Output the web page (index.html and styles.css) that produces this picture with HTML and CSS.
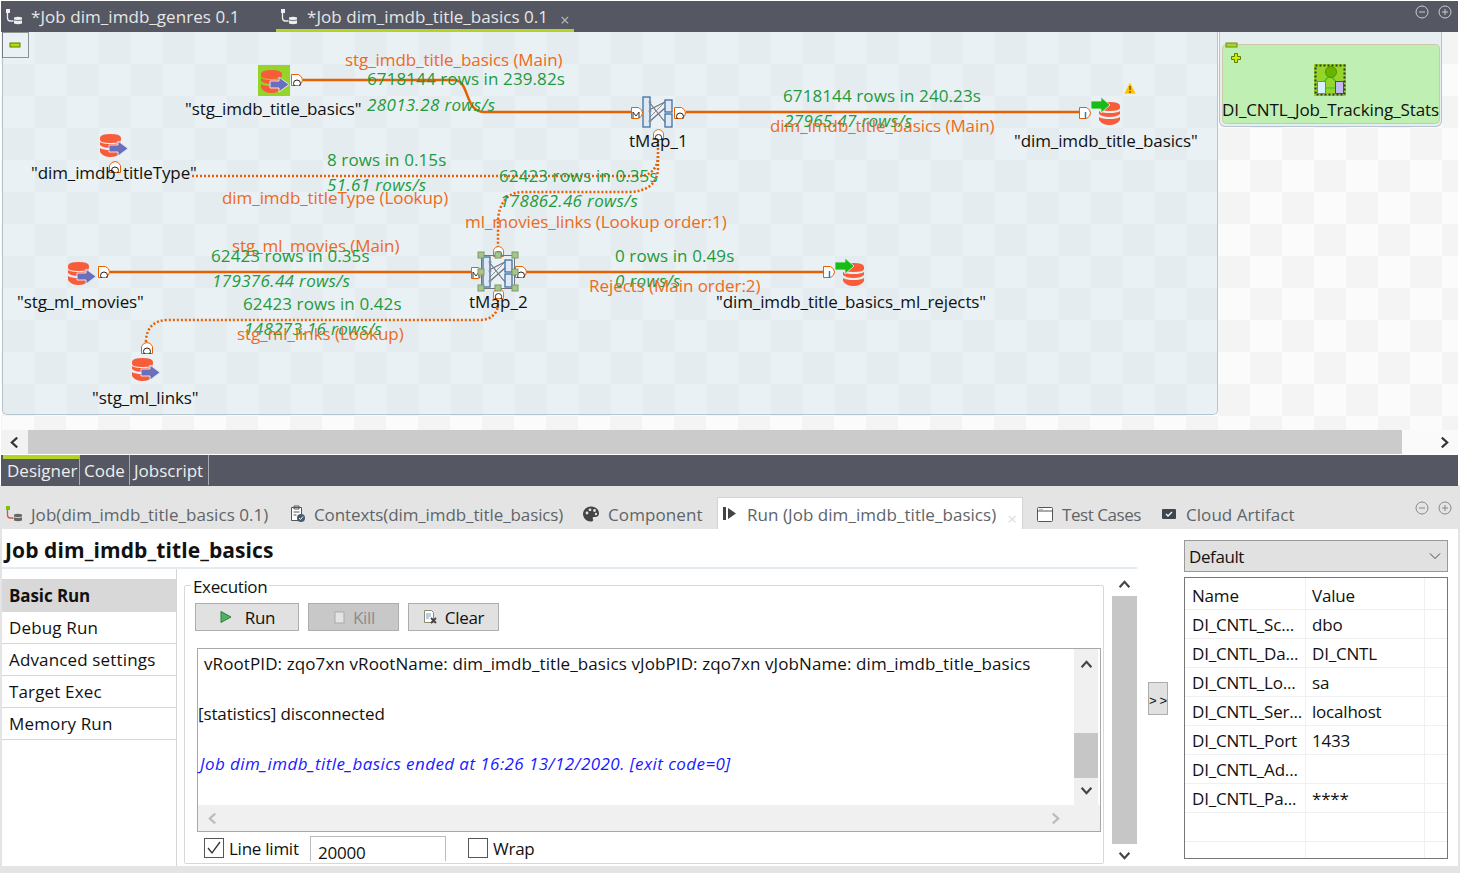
FILE: index.html
```html
<!DOCTYPE html>
<html lang="en">
<head>
    <meta charset="UTF-8">
    <title>Talend Job dim_imdb_title_basics</title>
    <link rel="stylesheet" href="styles.css">
</head>
<body>
<svg class="defs" width="0" height="0">
    <defs>
        <symbol id="job_icon" viewBox="0 0 18 18">
            <rect x="1" y="1" width="4" height="4" fill="currentColor"/>
            <path d="M2.5 5v5q0 3 3 3h3" fill="none" stroke="currentColor" stroke-width="1.3"/>
            <path d="M9 9.5q4-1.600 8 0v6q-4 1.600-8 0z" fill="currentColor"/>
            <path d="M9 12q4 1.300 8 0" fill="none" stroke="#555862" stroke-width=".8"/>
        </symbol>
        <symbol id="job_color" viewBox="0 0 18 18">
            <rect x="1" y="1" width="4" height="4" fill="#7cc400"/>
            <path d="M2.5 5v5q0 3 3 3h3" fill="none" stroke="#d85050" stroke-width="1.3"/>
            <path d="M9 9.500q4-1.600 8 0v6q-4 1.600-8 0z" fill="#666"/>
            <path d="M9 12q4 1.300 8 0" fill="none" stroke="#e4e4e4" stroke-width=".8"/>
        </symbol>
        <symbol id="db_in" viewBox="0 0 32 32">
            <path d="M3 9q0-4 10.500-4T24 9v2q0 3-10.500 3T3 11z" fill="#f85c38"/>
            <path d="M3 13q3 2 10.500 2T24 13v3q-3 3-10.500 3T3 16z" fill="#f85c38"/>
            <path d="M3 19q3 2 10.500 2T24 19v4q-3 5-10.500 5T3 23z" fill="#f85c38"/>
            <path d="M12 16h9v-4l10 7.500-10 7.500v-4h-9z" fill="#6b6fbb" stroke="#dfe4ef" stroke-width="1"/>
        </symbol>
        <symbol id="db_out" viewBox="0 0 32 32">
            <path d="M9 10q0-4 10.500-4T30 10v2q0 3-10.500 3T9 12z" fill="#f85c38"/>
            <path d="M9 15q3 2 10.500 2T30 15v3q-3 3-10.500 3T9 18z" fill="#f85c38"/>
            <path d="M9 21q3 2 10.500 2T30 21v3q-3 5-10.500 5T9 24z" fill="#f85c38"/>
            <path d="M1 5h10V1l9 8-9 8v-4H1z" fill="#17bd17" stroke="#e8f0f4" stroke-width=".8"/>
        </symbol>
        <symbol id="tmap" viewBox="0 0 32 32">
            <path d="M7 6l16 20M7 14l16-8M7 26l16-14" stroke="#6c6f78" stroke-width="1.200" fill="none"/>
            <path d="M7 6L23 26M7 22L23 6" stroke="#8a8d95" stroke-width="1" fill="none"/>
            <rect x="1" y="1" width="7" height="30" fill="#dfe9f5" stroke="#3f6f9f" stroke-width="1.300"/>
            <rect x="23" y="4" width="7" height="12" fill="#dfe9f5" stroke="#3f6f9f" stroke-width="1.300"/>
            <rect x="23" y="18" width="7" height="13" fill="#dfe9f5" stroke="#3f6f9f" stroke-width="1.300"/>
            <circle cx="8" cy="6" r="1.500" fill="#8a8d95"/>
            <circle cx="8" cy="15" r="1.500" fill="#8a8d95"/>
            <circle cx="8" cy="25" r="1.500" fill="#8a8d95"/>
        </symbol>
        <symbol id="port_o" viewBox="0 0 12 12">
            <path d="M.5.500h7q4 2 4 5.500t-4 5.500h-7z" fill="#fff" stroke="#e66000"/>
            <circle cx="6" cy="9.500" r="3.500" fill="none" stroke="#222" stroke-width="1"/>
        </symbol>
        <symbol id="port_m" viewBox="0 0 12 12">
            <path d="M.5.500h7q4 2 4 5.500t-4 5.500h-7z" fill="#fff" stroke="#e66000"/>
            <path d="M2 11V5l3 4 3-4v6" fill="none" stroke="#333" stroke-width="1"/>
        </symbol>
        <symbol id="port_top" viewBox="0 0 12 12">
            <path d="M.5 11.500v-7q2-4 5.500-4t5.500 4v7z" fill="#fff" stroke="#e66000"/>
            <circle cx="6" cy="9.500" r="3.500" fill="none" stroke="#222" stroke-width="1"/>
        </symbol>
        <symbol id="port_i" viewBox="0 0 12 12">
            <path d="M.5.500h7q4 2 4 5.500t-4 5.500h-7z" fill="#fff" stroke="#e66000"/>
            <path d="M6.500 5v7" stroke="#2a7fc0" stroke-width="1.500"/>
        </symbol>
        <symbol id="chev_up" viewBox="0 0 12 12">
            <path d="M1.500 8.500L6 3.500l4.500 5" fill="none" stroke="currentColor" stroke-width="2"/>
        </symbol>
        <symbol id="chev_down" viewBox="0 0 12 12">
            <path d="M1.500 3.500L6 8.500l4.500-5" fill="none" stroke="currentColor" stroke-width="2"/>
        </symbol>
        <symbol id="chev_left" viewBox="0 0 12 12">
            <path d="M8.500 1.500L3.500 6l5 4.500" fill="none" stroke="currentColor" stroke-width="2"/>
        </symbol>
        <symbol id="chev_right" viewBox="0 0 12 12">
            <path d="M3.500 1.500L8.500 6l-5 4.500" fill="none" stroke="currentColor" stroke-width="2"/>
        </symbol>
        <symbol id="min_icon" viewBox="0 0 14 14">
            <circle cx="7" cy="7" r="6" fill="none" stroke="currentColor"/>
            <path d="M4 7h6" stroke="currentColor"/>
        </symbol>
        <symbol id="max_icon" viewBox="0 0 14 14">
            <circle cx="7" cy="7" r="6" fill="none" stroke="currentColor"/>
            <path d="M4 7h6M7 4v6" stroke="currentColor"/>
        </symbol>
    </defs>
</svg>

<div class="editor">
    <div class="editor_tabs">
        <div class="editor_tab">
            <svg class="tab_icon"><use href="#job_icon"/></svg>
            <span>*Job dim_imdb_genres 0.1</span>
        </div>
        <div class="editor_tab active">
            <svg class="tab_icon"><use href="#job_icon"/></svg>
            <span>*Job dim_imdb_title_basics 0.1</span>
            <span class="tab_close">×</span>
        </div>
        <div class="win_btns">
            <svg class="win_icon"><use href="#min_icon"/></svg>
            <svg class="win_icon"><use href="#max_icon"/></svg>
        </div>
    </div>

    <div class="canvas">
        <div class="job_area"></div>
        <div class="subjob_outer"></div>
        <svg class="diagram" width="1460" height="398" viewBox="0 32 1460 398">
            <!-- collapse marker -->
            <rect x="2.500" y="32.500" width="26" height="25" fill="none" stroke="#333" stroke-dasharray="1 1"/>
            <rect x="10" y="43" width="10" height="4" fill="#b4dc00" stroke="#5f7c00"/>

            <!-- subjob block -->
            <rect x="1222.500" y="44.500" width="217" height="79" rx="4" fill="#c0efb4" stroke="#cfc8a6"/>
            <rect x="1226" y="43" width="11" height="4" fill="#a8d42c" stroke="#6f8f10"/>
            <path d="M1231.500 56.500h3v-3h3v3h3v3h-3v3h-3v-3h-3z" fill="#c8f000" stroke="#5f7c00"/>
            <rect x="1314" y="64" width="32" height="32" fill="#95d52a"/>
            <rect x="1315.500" y="65.500" width="29" height="29" fill="none" stroke="#333" stroke-width="2" stroke-dasharray="2 2"/>
            <path d="M1322 84l8-9 8 9M1322 88h16" stroke="#28c828" stroke-width="1.200" fill="none"/>
            <circle cx="1331" cy="72" r="5.500" fill="#6ab400" stroke="#4f9400"/>
            <rect x="1317.500" y="81.500" width="8" height="12" fill="#d8f0ff" stroke="#18a0e8"/>
            <rect x="1335.500" y="81.500" width="8" height="12" fill="#c4b8f0" stroke="#8018d8"/>

            <!-- connections -->
            <path class="flow" d="M303 80H454C470 80 464 112 484 112H640"/>
            <path class="flow" d="M686 112H1080"/>
            <path class="flow" d="M110 272H478"/>
            <path class="flow" d="M526 272H824"/>
            <path class="lookup" d="M192 176H640C650 176 658 168 658 156"/>
            <path class="lookup" d="M658 140V168C658 184 646 192 628 192H522C508 192 498 204 498 222V250"/>
            <path class="lookup" d="M498 292V304C498 314 490 320 480 320H168C154 320 146 328 146 342"/>

            <!-- components -->
            <rect x="258" y="65" width="32" height="31" fill="#95d52a"/>
            <use href="#db_in" x="258" y="65" width="32" height="32"/>
            <use href="#port_o" x="291" y="74" width="12" height="12"/>

            <use href="#db_in" x="97" y="129" width="32" height="32"/>
            <use href="#port_top" x="109" y="161" width="12" height="12"/>

            <use href="#tmap" x="642" y="96" width="32" height="32"/>
            <use href="#port_m" x="631" y="107" width="12" height="12"/>
            <use href="#port_o" x="674" y="107" width="12" height="12"/>
            <use href="#port_top" x="653" y="129" width="11" height="11"/>

            <use href="#db_out" x="1090" y="96" width="32" height="32"/>
            <use href="#port_i" x="1079" y="107" width="12" height="12"/>
            <path d="M1130 82l6 12h-12z" fill="#ffc000" stroke="#fff3c0" stroke-width=".6"/>
            <path d="M1130 86v4M1130 91v2" stroke="#6b5200" stroke-width="1.400"/>

            <use href="#db_in" x="65" y="257" width="32" height="32"/>
            <use href="#port_o" x="98" y="266" width="12" height="12"/>

            <use href="#tmap" x="482" y="256" width="32" height="32"/>
            <use href="#port_m" x="471" y="267" width="12" height="12"/>
            <use href="#port_o" x="515" y="266" width="12" height="12"/>
            <use href="#port_top" x="493" y="246" width="11" height="11"/>
            <use href="#port_top" x="493" y="288" width="11" height="11"/>
            <g class="sel">
                <rect x="481.500" y="255.500" width="33" height="33"/>
                <rect class="grip" x="478" y="252" width="6" height="6"/>
                <rect class="grip" x="495" y="252" width="6" height="6"/>
                <rect class="grip" x="512" y="252" width="6" height="6"/>
                <rect class="grip" x="478" y="269" width="6" height="6"/>
                <rect class="grip" x="512" y="269" width="6" height="6"/>
                <rect class="grip" x="478" y="285" width="6" height="6"/>
                <rect class="grip" x="495" y="285" width="6" height="6"/>
                <rect class="grip" x="512" y="285" width="6" height="6"/>
            </g>

            <use href="#db_out" x="834" y="257" width="32" height="32"/>
            <use href="#port_i" x="823" y="266" width="12" height="12"/>

            <use href="#db_in" x="129" y="353" width="32" height="32"/>
            <use href="#port_top" x="141" y="342" width="12" height="12"/>

            <!-- labels -->
            <text class="link" x="345" y="66">stg_imdb_title_basics (Main)</text>
            <text class="stat" x="367" y="85">6718144 rows in 239.82s</text>
            <text class="name" x="185" y="115">"stg_imdb_title_basics"</text>
            <text class="rate" x="367" y="111">28013.28 rows/s</text>
            <text class="name tm" x="629" y="147">tMap_1</text>
            <text class="stat" x="783" y="102">6718144 rows in 240.23s</text>
            <text class="rate" x="784" y="127">27965.47 rows/s</text>
            <text class="link" x="770" y="132">dim_imdb_title_basics (Main)</text>
            <text class="name" x="1014" y="147">"dim_imdb_title_basics"</text>
            <text class="name" x="31" y="179">"dim_imdb_titleType"</text>
            <text class="stat" x="327" y="166">8 rows in 0.15s</text>
            <text class="rate" x="327" y="191">51.61 rows/s</text>
            <text class="link" x="222" y="204">dim_imdb_titleType (Lookup)</text>
            <text class="stat" x="499" y="182">62423 rows in 0.35s</text>
            <text class="rate" x="500" y="207">178862.46 rows/s</text>
            <text class="link" x="465" y="228">ml_movies_links (Lookup order:1)</text>
            <text class="link" x="232" y="252">stg_ml_movies (Main)</text>
            <text class="stat" x="211" y="262">62423 rows in 0.35s</text>
            <text class="rate" x="212" y="287">179376.44 rows/s</text>
            <text class="stat" x="615" y="262">0 rows in 0.49s</text>
            <text class="rate" x="615" y="287">0 rows/s</text>
            <text class="link" x="589" y="292">Rejects (Main order:2)</text>
            <text class="name" x="17" y="308">"stg_ml_movies"</text>
            <text class="name tm" x="469" y="308">tMap_2</text>
            <text class="name" x="716" y="308">"dim_imdb_title_basics_ml_rejects"</text>
            <text class="stat" x="243" y="310">62423 rows in 0.42s</text>
            <text class="rate" x="244" y="335">148273.16 rows/s</text>
            <text class="link" x="237" y="340">stg_ml_links (Lookup)</text>
            <text class="name" x="92" y="404">"stg_ml_links"</text>
            <text class="name" x="1222" y="116">DI_CNTL_Job_Tracking_Stats</text>
        </svg>
    </div>

    <div class="h_scroll">
        <div class="scroll_end"><svg class="chev"><use href="#chev_left"/></svg></div>
        <div class="h_thumb"></div>
        <div class="scroll_end"><svg class="chev"><use href="#chev_right"/></svg></div>
    </div>

    <div class="mode_tabs">
        <div class="mode_tab active">Designer</div>
        <div class="mode_tab">Code</div>
        <div class="mode_tab">Jobscript</div>
    </div>
</div>

<div class="views">
    <div class="view_tabs">
        <div class="view_tab job_tab">
            <svg class="view_icon"><use href="#job_color"/></svg>
            <span>Job(dim_imdb_title_basics 0.1)</span>
        </div>
        <div class="view_tab ctx_tab">
            <svg class="view_icon" viewBox="0 0 18 18">
                <path d="M3.500 2.500h10v13h-10z" fill="#fff" stroke="#555"/>
                <path d="M6 1h5v3H6zM5.500 7h6M5.500 10h3" stroke="#555" fill="none"/>
                <circle cx="13" cy="13" r="4" fill="#4a5a6a"/>
                <path d="M11 13l1.500 1.500 2.500-3" stroke="#fff" fill="none"/>
            </svg>
            <span>Contexts(dim_imdb_title_basics)</span>
        </div>
        <div class="view_tab comp_tab">
            <svg class="view_icon" viewBox="0 0 18 18">
                <path d="M9 1.500c4.500 0 8 3 8 7 0 2.500-2 3.500-3.500 3.500H12c-1.500 0-1.500 1.500-1 2.200.6 1-.2 2.300-2 2.300C4.500 16.500 1 13 1 9s3.500-7.500 8-7.500z" fill="#444"/>
                <circle cx="5" cy="8" r="1.400" fill="#e4e4e4"/>
                <circle cx="8" cy="4.800" r="1.400" fill="#e4e4e4"/>
                <circle cx="12.500" cy="5.500" r="1.400" fill="#e4e4e4"/>
                <circle cx="14" cy="9" r="1.200" fill="#e4e4e4"/>
            </svg>
            <span>Component</span>
        </div>
        <div class="view_tab run_tab">
            <svg class="view_icon" viewBox="0 0 18 18">
                <rect x="3" y="2" width="3" height="13" fill="#444"/>
                <path d="M8 3l8 5.500-8 5.500z" fill="#444"/>
            </svg>
            <span>Run (Job dim_imdb_title_basics)</span>
            <span class="run_close">×</span>
        </div>
        <div class="view_tab test_tab">
            <svg class="view_icon" viewBox="0 0 18 18">
                <rect x="1.500" y="2.500" width="15" height="14" rx="1" fill="#fff" stroke="#555"/>
                <path d="M2 6h14" stroke="#555"/>
                <path d="M3.500 4.300h3" stroke="#555" stroke-dasharray="1 1"/>
            </svg>
            <span>Test Cases</span>
        </div>
        <div class="view_tab cloud_tab">
            <svg class="view_icon" viewBox="0 0 18 18">
                <path d="M3 4h12q1 0 1 1v8q0 1-1 1H3q-1 0-1-1V5q0-1 1-1z" fill="#3f4650"/>
                <path d="M6 9l2 2 4-4" stroke="#fff" stroke-width="1.300" fill="none"/>
            </svg>
            <span>Cloud Artifact</span>
        </div>
        <div class="win_btns gray">
            <svg class="win_icon"><use href="#min_icon"/></svg>
            <svg class="win_icon"><use href="#max_icon"/></svg>
        </div>
    </div>

    <div class="run_view">
        <div class="run_main">
            <h1 class="run_title">Job dim_imdb_title_basics</h1>
            <div class="run_body">
                <ul class="side_menu">
                    <li class="selected">Basic Run</li>
                    <li>Debug Run</li>
                    <li>Advanced settings</li>
                    <li>Target Exec</li>
                    <li>Memory Run</li>
                </ul>
                <div class="exec_wrap">
                    <fieldset class="exec">
                        <legend>Execution</legend>
                        <div class="exec_btns">
                            <button class="btn btn_run">
                                <svg class="btn_icon" viewBox="0 0 14 14"><path d="M2 1.500l10 5.500-10 5.500z" fill="#52b060" stroke="#2f8040"/></svg>
                                Run
                            </button>
                            <button class="btn btn_kill">
                                <svg class="btn_icon" viewBox="0 0 14 14"><rect x="3" y="2" width="9" height="11" fill="#e4e4e4" stroke="#aaa"/></svg>
                                Kill
                            </button>
                            <button class="btn btn_clear">
                                <svg class="btn_icon" viewBox="0 0 14 14">
                                    <path d="M1.500 .500h7l2 2v10h-9z" fill="#fff" stroke="#8a8a70"/>
                                    <path d="M3 4h5M3 6h5M3 8h3" stroke="#7c98c8"/>
                                    <path d="M8 8l5 5M13 8l-5 5" stroke="#444" stroke-width="1.800"/>
                                </svg>
                                Clear
                            </button>
                        </div>
                        <div class="console">
                            <div class="console_top">
                                <div class="console_text">
                                    <p class="log first">vRootPID: zqo7xn vRootName: dim_imdb_title_basics vJobPID: zqo7xn vJobName: dim_imdb_title_basics</p>
                                    <p class="log">[statistics] disconnected</p>
                                    <p class="log end">Job dim_imdb_title_basics ended at 16:26 13/12/2020. [exit code=0]</p>
                                </div>
                                <div class="console_v">
                                    <svg class="chev dark"><use href="#chev_up"/></svg>
                                    <div class="console_thumb"></div>
                                    <svg class="chev dark"><use href="#chev_down"/></svg>
                                </div>
                            </div>
                            <div class="console_h">
                                <svg class="chev light"><use href="#chev_left"/></svg>
                                <svg class="chev light"><use href="#chev_right"/></svg>
                            </div>
                        </div>
                        <div class="limit_row">
                            <span class="check on">
                                <svg viewBox="0 0 18 18"><path d="M3 9l4 5 8-11" fill="none" stroke="#333" stroke-width="1.300"/></svg>
                            </span>
                            <span class="limit_label">Line limit</span>
                            <span class="limit_input">20000</span>
                            <span class="check"></span>
                            <span class="wrap_label">Wrap</span>
                        </div>
                    </fieldset>
                </div>
                <div class="run_scroll">
                    <svg class="chev dark"><use href="#chev_up"/></svg>
                    <div class="run_thumb"></div>
                    <svg class="chev dark"><use href="#chev_down"/></svg>
                </div>
            </div>
        </div>

        <div class="toggle_col"><button class="toggle">&gt;&gt;</button></div>

        <div class="ctx_col">
            <div class="ctx_select">
                <span>Default</span>
                <svg class="select_chev" viewBox="0 0 12 12"><path d="M1 3.500L6 8.500l5-5" fill="none" stroke="#444"/></svg>
            </div>
            <table class="ctx_table">
                <tr class="head"><td>Name</td><td>Value</td><td></td></tr>
                <tr><td>DI_CNTL_Sc...</td><td>dbo</td><td></td></tr>
                <tr><td>DI_CNTL_Da...</td><td>DI_CNTL</td><td></td></tr>
                <tr><td>DI_CNTL_Lo...</td><td>sa</td><td></td></tr>
                <tr><td>DI_CNTL_Ser...</td><td>localhost</td><td></td></tr>
                <tr><td>DI_CNTL_Port</td><td>1433</td><td></td></tr>
                <tr><td>DI_CNTL_Ad...</td><td></td><td></td></tr>
                <tr><td>DI_CNTL_Pa...</td><td>****</td><td></td></tr>
                <tr><td></td><td></td><td></td></tr>
                <tr><td></td><td></td><td></td></tr>
            </table>
        </div>
    </div>
</div>
</body>
</html>
```

FILE: styles.css
```css
* { box-sizing: border-box; }
html, body { margin: 0; padding: 0; }
body { width: 1460px; height: 873px; overflow: hidden; background: #e4e4e4; font-family: "Open Sans", "Noto Sans", sans-serif; font-size: 17px; letter-spacing: -0.1px; color: #111; }
.defs { position: absolute; }

/* editor area */
.editor { height: 485px; padding: 1px 2px 0 1px; background: #fff; display: flex; flex-direction: column; }
.editor_tabs { height: 31px; background: #555862; display: flex; color: #e6e6e6; padding-left: 3px; letter-spacing: 0.05px; flex: none; }
.editor_tab { width: 272px; height: 31px; display: flex; align-items: center; gap: 8px; padding-left: 1px; }
.editor_tab.active { border-bottom: 3px solid #b5d327; padding: 3px 0 0 4px; width: 298px; gap: 9px; }
.tab_icon { width: 18px; height: 18px; color: #eee; flex: none; }
.tab_close { color: #bbb; font-size: 16px; margin-left: 3px; margin-top: 6px; }
.win_btns { margin-left: auto; display: flex; gap: 9px; padding: 4px 6px 0 0; color: #ccc; }
.win_btns.gray { color: #888; padding-top: 16px; }
.win_icon { width: 14px; height: 14px; }

.canvas { position: relative; height: 398px; flex: none; overflow: hidden; background: repeating-conic-gradient(#f4f4f4 0 25%, #fbfbfb 0 50%) 1px 0 / 64px 64px; }
.job_area { position: absolute; left: 1px; top: 0; width: 1216px; height: 383px; border: 1px solid #b5c5d0; border-top: none; border-radius: 0 0 5px 5px; background: repeating-conic-gradient(#e4ecef 0 25%, #e9f1f5 0 50%) 0 0 / 64px 64px; }
.subjob_outer { position: absolute; left: 1218px; top: 0; width: 223px; height: 95px; border: 1px solid #b5c5d0; border-top: none; border-radius: 0 0 6px 6px; background: #e6eef2; }
.diagram { position: absolute; left: -1px; top: 0; display: block; }
.diagram text { font-family: "Open Sans", "Noto Sans", sans-serif; font-size: 17px; }
.flow { fill: none; stroke: #e66000; stroke-width: 2.500; }
.lookup { fill: none; stroke: #e66000; stroke-width: 2.500; stroke-dasharray: 2 2; }
.diagram .link { fill: #ee6a1a; letter-spacing: -0.06px; }
.diagram .stat { fill: #1f9a3c; letter-spacing: 0.1px; }
.diagram .rate { fill: #1f9a3c; font-style: italic; letter-spacing: 0.35px; }
.diagram .name { fill: #111; letter-spacing: -0.1px; }
.diagram .tm { letter-spacing: 0.05px; }
.sel rect { fill: none; stroke: #70747c; }
.sel .grip { fill: #a6c48c; stroke: #7a9a68; stroke-width: 1; }

.h_scroll { height: 24px; display: flex; flex: none; background: #fff; }
.scroll_end { width: 27px; background: #f2f2f2; display: flex; align-items: center; justify-content: center; color: #333; }
.scroll_end:last-child { width: 56px; background: #fafafa; justify-content: flex-end; padding-right: 7px; }
.h_thumb { flex: 1; background: #cbcbcb; }
.chev { width: 13px; height: 13px; display: block; flex: none; }
.chev.dark { color: #444; }
.chev.light { color: #bbb; }

.mode_tabs { height: 31px; margin-top: 1px; background: #555862; display: flex; flex: none; padding-left: 2px; color: #eee; letter-spacing: 0; }
.mode_tab { width: 50px; height: 30px; line-height: 31px; padding-left: 4px; border-right: 1px solid #a8aab0; }
.mode_tab:last-child { width: 79px; }
.mode_tab.active { width: 77px; border-top: 4px solid #b5d327; line-height: 24px; }

/* bottom views */
.views { height: 388px; padding: 0 2px 7px 2px; display: flex; flex-direction: column; }
.view_tabs { height: 44px; display: flex; align-items: flex-end; flex: none; color: #606468; letter-spacing: 0.05px; }
.view_tab { height: 31px; display: flex; align-items: center; gap: 8px; flex: none; padding-top: 1px; }
.view_icon { width: 18px; height: 18px; flex: none; }
.job_tab { width: 284px; padding-left: 3px; }
.ctx_tab { width: 295px; padding-left: 2px; letter-spacing: -0.1px; }
.comp_tab { width: 136px; padding-left: 1px; letter-spacing: 0.1px; }
.run_tab { width: 306px; height: 32px; background: #fff; border: 1px solid #d4d4d4; border-bottom: none; padding-left: 2px; gap: 9px; }
.run_close { color: #ddd; margin-left: 2px; margin-top: 8px; }
.test_tab { width: 137px; padding-left: 13px; letter-spacing: -0.45px; }
.cloud_tab { width: 150px; }
.view_tabs .win_btns { align-self: flex-start; margin-left: auto; padding-right: 6px; }

.run_view { flex: 1; background: #fff; display: flex; min-height: 0; }
.run_main { width: 1135px; flex: none; display: flex; flex-direction: column; }
.run_title { margin: 0; height: 40px; padding: 6px 0 0 3px; font-size: 21px; font-weight: 700; line-height: 30px; letter-spacing: 0.1px; border-bottom: 2px solid #e4ecf2; flex: none; }
.run_body { flex: 1; display: flex; min-height: 0; }

.side_menu { width: 175px; list-style: none; margin: 0; padding: 10px 0 0; border-right: 1px solid #d6d6d6; flex: none; letter-spacing: 0.15px; }
.side_menu li { height: 32px; line-height: 32px; padding-left: 7px; border-bottom: 1px solid #d6d6d6; }
.side_menu li.selected { height: 33px; line-height: 33px; background: #d8d8d8; font-weight: 700; border-bottom: none; letter-spacing: -0.1px; }

.exec_wrap { width: 935px; flex: none; padding: 5px 8px 0 7px; }
.exec { height: 290px; margin: 0; padding: 7px 0 0 10px; border: 1px solid #d8d8d8; border-radius: 2px; min-width: 0; }
.exec legend { padding: 4px 2px 0; margin-left: -4px; line-height: 18px; letter-spacing: -0.35px; }
.exec_btns { display: flex; gap: 9px; height: 28px; margin-bottom: 17px; }
.btn { height: 28px; font: inherit; letter-spacing: -0.3px; background: #e1e1e1; border: 1px solid #adadad; color: #111; display: flex; align-items: center; justify-content: center; padding: 0; }
.btn_icon { width: 14px; height: 14px; }
.btn_run { width: 104px; gap: 12px; }
.btn_kill { width: 91px; background: #c8c8c8; color: #8c8c8c; gap: 7px; }
.btn_clear { width: 91px; gap: 8px; }

.console { width: 904px; height: 184px; margin-left: 2px; border: 1px solid #a8a8a8; display: flex; flex-direction: column; }
.console_top { height: 156px; display: flex; flex: none; }
.console_text { flex: 1; letter-spacing: -0.13px; }
.log { margin: 0 0 21px; height: 29px; line-height: 29px; }
.log.first { padding-left: 6px; letter-spacing: 0.1px; }
.log.end { color: #1a1aff; font-style: italic; letter-spacing: 0.43px; padding-left: 2px; }
.console_v { width: 24px; margin-right: 2px; background: #f0f0f0; display: flex; flex-direction: column; align-items: center; padding-top: 9px; }
.console_thumb { width: 24px; height: 45px; margin-top: 62px; background: #c6c6c6; flex: none; }
.console_v .chev:last-child { margin-top: 6px; }
.console_h { height: 26px; background: #f0f0f0; display: flex; justify-content: space-between; align-items: center; padding: 0 38px 0 8px; }

.limit_row { display: flex; align-items: center; height: 26px; margin-top: 3px; padding-left: 9px; letter-spacing: -0.25px; }
.check { width: 20px; height: 20px; border: 1px solid #555; background: #fff; flex: none; }
.check svg { display: block; }
.limit_label { margin-left: 5px; width: 81px; }
.limit_input { width: 136px; height: 25px; margin-top: 1px; padding: 5px 0 0 7px; line-height: 21px; border: 1px solid #bbb; border-bottom: none; margin-right: 22px; }
.wrap_label { margin-left: 5px; }

.run_scroll { width: 25px; flex: none; display: flex; flex-direction: column; align-items: center; padding-top: 9px; }
.run_thumb { width: 25px; flex: 1; margin: 5px 0; background: #c6c6c6; }
.run_scroll .chev:last-child { margin-bottom: 4px; }

.toggle_col { width: 47px; flex: none; padding: 153px 0 0 11px; }
.toggle { width: 20px; height: 33px; padding: 3px 0 0; font: 13px "Liberation Sans", sans-serif; letter-spacing: 3px; background: #e1e1e1; border: 1px solid #adadad; color: #111; }

.ctx_col { width: 264px; flex: none; padding-top: 11px; }
.ctx_select { height: 32px; background: #e1e1e1; border: 1px solid #999; display: flex; align-items: center; justify-content: space-between; padding: 0 6px 0 4px; letter-spacing: -0.4px; }
.select_chev { width: 12px; height: 12px; }
.ctx_table { width: 264px; height: 281px; margin-top: 5px; border: 1px solid #777; border-collapse: separate; border-spacing: 0; table-layout: fixed; letter-spacing: -0.2px; }
.ctx_table td { height: 29px; padding: 1px 0 0 6px; border-right: 1px solid #eef0f2; border-bottom: 1px solid #eef0f2; white-space: nowrap; overflow: hidden; }
.ctx_table .head td { height: 32px; padding-top: 3px; }
.ctx_table td:nth-child(1) { width: 121px; padding-left: 7px; }
.ctx_table td:nth-child(2) { width: 119px; }
.ctx_table td:nth-child(3) { border-right: none; }
.ctx_table tr:last-child td { border-bottom: none; height: 16px; }
```
